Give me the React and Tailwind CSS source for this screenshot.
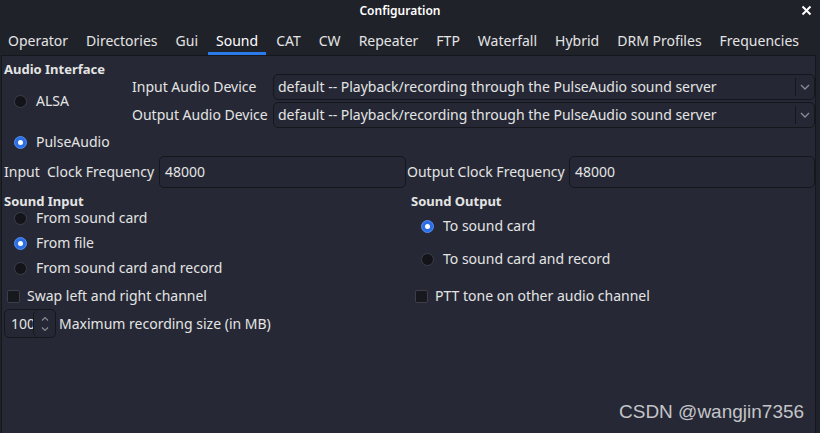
import React from "react";

const font = { fontFamily: '"Noto Sans", "Open Sans", sans-serif' };

function Radio({ checked }) {
  return checked ? (
    <span className="w-[13px] h-[13px] rounded-full bg-[#2b6ee6] border border-[#5590f0] flex items-center justify-center shrink-0">
      <span className="w-[5px] h-[5px] rounded-full bg-white" />
    </span>
  ) : (
    <span className="w-[13px] h-[13px] rounded-full bg-[#121419] border border-[#3c3f49] shrink-0" />
  );
}

function RadioRow({ checked, label, className = "" }) {
  return (
    <div className={"flex items-center h-[20px] " + className}>
      <span className="w-[32px] flex justify-center pl-[1px]">
        <Radio checked={checked} />
      </span>
      <span>{label}</span>
    </div>
  );
}

function Check({ label, className = "" }) {
  return (
    <div className={"flex items-center h-[20px] " + className}>
      <span className="w-[13px] h-[13px] rounded-[2px] bg-[#17191e] border border-[#3c3f49] shrink-0" />
      <span className="ml-[7px]">{label}</span>
    </div>
  );
}

function Combo() {
  return (
    <div className="flex-1 h-[26px] rounded-[5px] border border-[#15171d] bg-[#252834] flex items-center">
      <span className="flex-1 pl-[4px] whitespace-nowrap overflow-hidden">
        default -- Playback/recording through the PulseAudio sound server
      </span>
      <span className="h-[18px] w-px bg-[#15171d]" />
      <span className="w-[18px] flex justify-center">
        <svg width="10" height="6" viewBox="0 0 10 6" fill="none">
          <path d="M1 1l4 4 4-4" stroke="#8a8d96" strokeWidth="1.3" />
        </svg>
      </span>
    </div>
  );
}

const tabs = [
  "Operator",
  "Directories",
  "Gui",
  "Sound",
  "CAT",
  "CW",
  "Repeater",
  "FTP",
  "Waterfall",
  "Hybrid",
  "DRM Profiles",
  "Frequencies",
];

export default function App() {
  return (
    <div
      className="relative w-[820px] h-[433px] bg-[#20222a] text-[#e4e4e4] text-[14px] leading-[18px] flex flex-col overflow-hidden"
      style={font}
    >
      {/* title bar */}
      <div className="relative h-[22px] flex items-center justify-center pr-[20px]">
        <span className="text-[12px] font-semibold text-white">Configuration</span>
        <span className="absolute right-[8px] top-[5px]">
          <svg width="11" height="11" viewBox="0 0 11 11">
            <path d="M1.5 1.5l8 8M9.5 1.5l-8 8" stroke="white" strokeWidth="2" />
          </svg>
        </span>
      </div>

      {/* tabs */}
      <div className="h-[33px] flex items-stretch -ml-[1px]">
        {tabs.map((t) => (
          <div
            key={t}
            className={
              "relative px-[9px] flex items-center pt-[5px] " +
              (t === "Sound" ? "text-white" : "")
            }
          >
            {t}
            {t === "Sound" && (
              <span className="absolute left-[1px] right-[1px] bottom-0 h-[3px] bg-[#2c79ea]" />
            )}
          </div>
        ))}
      </div>

      {/* panel */}
      <div className="flex-1 ml-[1px] mr-[4px] bg-[#262935] border-t border-l border-r border-[#15171d] pl-[2px] flex flex-col">
        <div className="font-bold text-[13px] pt-[5px] leading-[16px]">Audio Interface</div>

        <div className="flex -mt-[3px]">
          <div className="w-[128px] flex flex-col pt-[17px] gap-[21px]">
            <RadioRow label="ALSA" />
            <RadioRow checked label="PulseAudio" />
          </div>
          <div className="flex-1 flex flex-col gap-[2px]">
            <div className="flex items-center">
              <span className="w-[141px]">Input Audio Device</span>
              <Combo />
            </div>
            <div className="flex items-center">
              <span className="w-[141px]">Output Audio Device</span>
              <Combo />
            </div>
          </div>
        </div>

        <div className="flex items-center mt-[4px] h-[32px]">
          <span className="w-[155px] whitespace-pre">Input  Clock Frequency</span>
          <div className="w-[247px] h-[32px] rounded-[5px] border border-[#15171d] bg-[#252834] flex items-center pl-[5px]">
            48000
          </div>
          <span className="w-[163px] pl-[1px]">Output Clock Frequency</span>
          <div className="flex-1 h-[32px] rounded-[5px] border border-[#15171d] bg-[#252834] flex items-center pl-[5px]">
            48000
          </div>
        </div>

        <div className="flex mt-[5px]">
          {/* Sound Input */}
          <div className="w-[407px] flex flex-col">
            <div className="font-bold text-[13px] leading-[16px]">Sound Input</div>
            <div className="flex flex-col gap-[5px] -mt-[1px]">
              <RadioRow label="From sound card" />
              <RadioRow checked label="From file" />
              <RadioRow label="From sound card and record" />
            </div>
            <Check label="Swap left and right channel" className="mt-[8px] pl-[3px]" />
            <div className="flex items-center mt-[3px]">
              <div className="w-[52px] h-[29px] rounded-[5px] border border-[#15171d] bg-[#252834] flex">
                <span className="w-[28px] overflow-hidden whitespace-nowrap pl-[6px] flex items-center">
                  100
                </span>
                <span className="flex-1 border-l border-[#15171d] rounded-[5px] flex flex-col items-center justify-center gap-[6px]">
                  <svg width="8" height="5" viewBox="0 0 8 5" fill="none">
                    <path d="M1 4.5l3-3 3 3" stroke="#8a8d96" strokeWidth="1.1" />
                  </svg>
                  <svg width="8" height="5" viewBox="0 0 8 5" fill="none">
                    <path d="M1 0.5l3 3 3-3" stroke="#8a8d96" strokeWidth="1.1" />
                  </svg>
                </span>
              </div>
              <span className="ml-[3px]">Maximum recording size (in MB)</span>
            </div>
          </div>

          {/* Sound Output */}
          <div className="flex-1 flex flex-col">
            <div className="font-bold text-[13px] leading-[16px]">Sound Output</div>
            <RadioRow checked label="To sound card" className="mt-[7px]" />
            <RadioRow label="To sound card and record" className="mt-[13px]" />
            <Check label="PTT tone on other audio channel" className="mt-[17px] pl-[4px]" />
          </div>
        </div>
      </div>

      <div
        className="absolute left-[619px] top-[401px] text-[19px] text-[#c4c4c8] leading-[22px]"
        style={{ fontFamily: '"Liberation Sans", Arial, sans-serif' }}
      >
        CSDN @wangjin7356
      </div>
    </div>
  );
}
